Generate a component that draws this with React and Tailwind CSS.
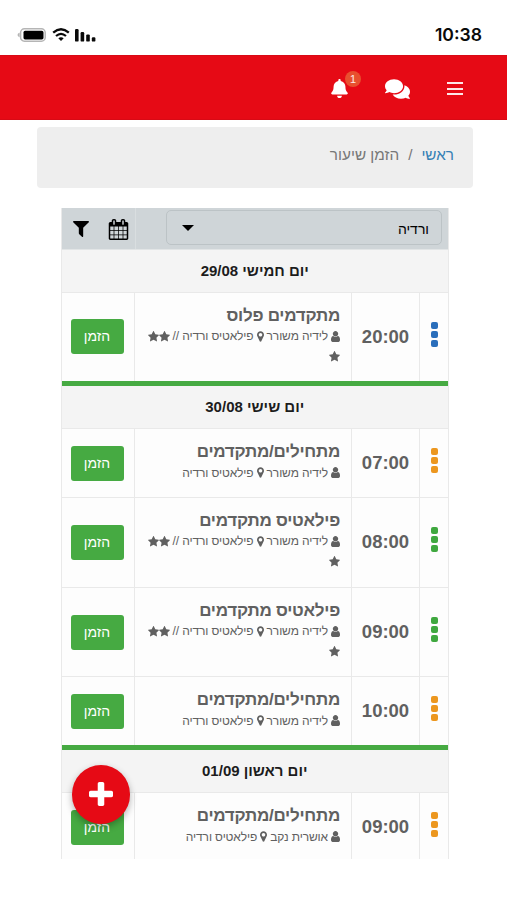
import React from 'react';
import { FaBell, FaComments } from 'react-icons/fa';

const PATHS = {
  star: 'M1728 647q0 22-26 48l-363 354 86 500q1 7 1 20 0 21-10.5 35.5t-30.5 14.5q-19 0-40-12l-449-236-449 236q-22 12-40 12-21 0-31.5-14.5t-10.5-35.5q0-6 2-20l86-500-364-354q-25-27-25-48 0-37 56-46l502-73 225-455q19-41 49-41t49 41l225 455 502 73q56 9 56 46z',
  marker: 'M1152 640q0-106-75-181t-181-75-181 75-75 181 75 181 181 75 181-75 75-181zm256 0q0 109-33 179l-364 774q-16 33-47.5 52t-67.5 19-67.5-19-46.5-52l-365-774q-33-70-33-179 0-212 150-362t362-150 362 150 150 362z',
  user: 'M1536 1399q0 109-62.5 187t-150.5 78h-854q-88 0-150.5-78t-62.5-187q0-85 8.5-160.5t31.5-152 58.5-131 94-89 134.5-34.5q131 128 313 128t313-128q76 0 134.5 34.5t94 89 58.5 131 31.5 152 8.5 160.5zm-256-887q0 159-112.5 271.5t-271.5 112.5-271.5-112.5-112.5-271.5 112.5-271.5 271.5-112.5 271.5 112.5 112.5 271.5z',
  calendar: 'M192 1664h288v-288h-288v288zm352 0h320v-288h-320v288zm-352-352h288v-320h-288v320zm352 0h320v-320h-320v320zm-352-384h288v-288h-288v288zm736 736h320v-288h-320v288zm-384-736h320v-288h-320v288zm768 736h288v-288h-288v288zm-384-352h320v-320h-320v320zm-352-864v-288q0-13-9.5-22.5t-22.5-9.5h-64q-13 0-22.5 9.5t-9.5 22.5v288q0 13 9.5 22.5t22.5 9.5h64q13 0 22.5-9.5t9.5-22.5zm736 864h288v-320h-288v320zm-384-384h320v-288h-320v288zm384 0h288v-288h-288v288zm32-480v-288q0-13-9.5-22.5t-22.5-9.5h-64q-13 0-22.5 9.5t-9.5 22.5v288q0 13 9.5 22.5t22.5 9.5h64q13 0 22.5-9.5t9.5-22.5zm384-64v1280q0 52-38 90t-90 38h-1408q-52 0-90-38t-38-90v-1280q0-52 38-90t90-38h128v-96q0-66 47-113t113-47h64q66 0 113 47t47 113v96h384v-96q0-66 47-113t113-47h64q66 0 113 47t47 113v96h128q52 0 90 38t38 90z',
  filter: 'M1595 295q17 41-14 70l-493 493v742q0 42-39 59-13 5-25 5-27 0-45-19l-256-256q-19-19-19-45v-486l-493-493q-31-29-14-70 17-39 59-39h1280q42 0 59 39z',
  plus: 'M1600 736v192q0 40-28 68t-68 28h-416v416q0 40-28 68t-68 28h-192q-40 0-68-28t-28-68v-416h-416q-40 0-68-28t-28-68v-192q0-40 28-68t68-28h416v-416q0-40 28-68t68-28h192q40 0 68 28t28 68v416h416q40 0 68 28t28 68z',
};

const Icon = ({ name, className, viewBox = '0 0 1792 1792' }) => (
  <svg viewBox={viewBox} className={className} fill="currentColor">
    <path d={PATHS[name]} />
  </svg>
);

const Star = () => <Icon name="star" viewBox="64 96 1664 1560" className="h-[11px] w-[11px]" />;

const days = [
  {
    title: 'יום חמישי 29/08',
    lessons: [
      { time: '20:00', name: 'מתקדמים פלוס', coach: 'לידיה משורר', stars: true, color: 'bg-[#2a6ebb]' },
    ],
  },
  {
    title: 'יום שישי 30/08',
    lessons: [
      { time: '07:00', name: 'מתחילים/מתקדמים', coach: 'לידיה משורר', color: 'bg-[#ec971f]' },
      { time: '08:00', name: 'פילאטיס מתקדמים', coach: 'לידיה משורר', stars: true, color: 'bg-[#3fa83f]' },
      { time: '09:00', name: 'פילאטיס מתקדמים', coach: 'לידיה משורר', stars: true, color: 'bg-[#3fa83f]' },
      { time: '10:00', name: 'מתחילים/מתקדמים', coach: 'לידיה משורר', color: 'bg-[#ec971f]' },
    ],
  },
  {
    title: 'יום ראשון 01/09',
    lessons: [
      { time: '09:00', name: 'מתחילים/מתקדמים', coach: 'אושרית נקב', color: 'bg-[#ec971f]' },
    ],
  },
];

const StatusBar = () => (
  <div className="flex h-[55px] items-center justify-between pl-[17px] pr-[25px] pt-[14px]">
    <div className="flex items-center">
      <svg width="29" height="14" viewBox="0 0 29 14">
        <path d="M2.6 4.8Q.5 5.4.5 7T2.6 9.2z" fill="#b5b5b5" />
        <rect x="3.6" y=".8" width="24.6" height="12.4" rx="3.8" fill="none" stroke="#b5b5b5" strokeWidth="1.5" />
        <rect x="6.5" y="2.8" width="20" height="8.6" rx="1.6" fill="#000" />
      </svg>
      <svg width="18" height="14" viewBox="0 0 18 14" className="ml-[6px]" fill="none" stroke="#0a0a0a">
        <path d="M1.2 4.6Q9-2.2 16.8 4.6" strokeWidth="2.3" />
        <path d="M4 8Q9 3.6 14 8" strokeWidth="2.2" />
        <path d="M9 13 6.3 10.2Q9 8.2 11.7 10.2z" fill="#0a0a0a" stroke="none" />
      </svg>
      <svg width="21" height="14" viewBox="0 0 21 14" className="ml-[5px]" fill="#0a0a0a">
        <rect x="0" y="1" width="3.6" height="12.6" rx="1.2" />
        <rect x="5.6" y="4" width="3.6" height="9.6" rx="1.2" />
        <rect x="11.2" y="6.4" width="3.6" height="7.2" rx="1.2" />
        <rect x="16.8" y="9.2" width="3.6" height="4.4" rx="1.2" />
      </svg>
    </div>
    <span className="pt-px font-['Inter',sans-serif] text-[17.6px] font-semibold leading-5 text-[#0a0a0a]">10:38</span>
  </div>
);

const NavBar = () => (
  <div className="flex h-[65px] items-center justify-end border-y border-[#d80a15] bg-[#e60a15] pr-[44px] pt-[2px] text-white">
    <div className="relative mr-[37px]">
      <FaBell className="h-[19px] w-[17px]" />
      <span className="absolute -top-[8px] left-[14px] flex h-4 w-4 items-center justify-center rounded-full bg-[#e8502f] text-[11px] leading-none text-white/90">1</span>
    </div>
    <FaComments className="mr-[37px] h-[24px] w-[25px]" />
    <div className="flex w-[16px] flex-col gap-[3.5px]">
      <span className="h-[2px] bg-white/90" />
      <span className="h-[2px] bg-white/90" />
      <span className="h-[2px] bg-white/90" />
    </div>
  </div>
);

const Toolbar = () => (
  <div className="flex h-[41.5px] border-b border-[#e2e5e6] bg-[#cfd5d8] text-black">
    <div className="flex flex-1 pr-[6px] pt-[2px]">
      <div className="flex h-[35px] w-[276px] items-center justify-between rounded-[5px] border border-[#bcc3c6] pl-[15px] pr-[12px] text-[14px]">
        <span className="pt-[3px]">ורדיה</span>
        <span className="border-x-[6px] border-t-[6px] border-x-transparent border-t-black" />
      </div>
    </div>
    <div className="flex w-[74px] items-center justify-between border-r border-[#d9dee0] pl-[11px] pr-[6px] pt-[2px]">
      <Icon name="calendar" className="h-[21px] w-[21px]" />
      <Icon name="filter" viewBox="192 256 1408 1408" className="h-[16px] w-[16px]" />
    </div>
  </div>
);

const Lesson = ({ time, name, coach, stars, color }) => (
  <div className={`grid grid-cols-[28px_69px_216px_75px] border-t border-[#e9e9e9] bg-[#fdfdfd] text-[#606060] ${stars ? 'h-[89.7px]' : 'h-[68.8px]'}`}>
    <div className="flex flex-col items-center justify-center gap-[2px] pb-[5px]">
      <span className={`h-[7px] w-[7px] rounded-[2px] ${color}`} />
      <span className={`h-[7px] w-[7px] rounded-[2px] ${color}`} />
      <span className={`h-[7px] w-[7px] rounded-[2px] ${color}`} />
    </div>
    <div className="flex items-center justify-center border-x border-[#e9e9e9] text-[18.5px] font-bold">{time}</div>
    <div className="whitespace-nowrap pr-[11px] pt-[13px]">
      <div className="text-[17px] font-bold leading-[20px] tracking-[-0.26px]">{name}</div>
      <div className="flex h-[21px] items-center text-[12px] tracking-[-0.12px]">
        <Icon name="user" viewBox="256 128 1280 1536" className="h-[11px] w-[9px]" />
        <span className="mr-[3px]">{coach}</span>
        <Icon name="marker" viewBox="384 128 1024 1536" className="mx-[3px] h-[11px] w-[7px]" />
        <span>פילאטיס ורדיה{stars && ' //'}</span>
        {stars && (
          <span className="mr-[3px] flex">
            <Star />
            <Star />
          </span>
        )}
      </div>
      {stars && (
        <div className="mt-[4px]">
          <Star />
        </div>
      )}
    </div>
    <div className="flex items-center justify-center border-r border-[#e9e9e9]">
      <button className="h-[35px] w-[53px] rounded-[3px] bg-[#46aa42] text-[14px] text-white">הזמן</button>
    </div>
  </div>
);

export default function App() {
  return (
    <div className="relative h-[900px] w-[507px] overflow-hidden bg-white font-['Liberation_Sans',Arial,sans-serif]">
      <StatusBar />
      <NavBar />

      {/* Breadcrumb */}
      <div dir="rtl" className="mt-[7px] mr-[34px] ml-[37px] flex h-[61px] items-start gap-[9px] rounded-[4px] bg-[#eeeeee] pr-[19px] pt-[18px] text-[15.3px] leading-[20px] text-[#777]">
        <span className="text-[#3580b5]">ראשי</span>
        <span>/</span>
        <span>הזמן שיעור</span>
      </div>

      {/* Schedule */}
      <div dir="rtl" className="mt-[20px] ml-[60.5px] h-[651px] w-[388.5px] overflow-hidden border-x border-[#e9e9e9]">
        <Toolbar />
        {days.map((day, i) => (
          <div key={day.title} className={i > 0 ? 'border-t-[5px] border-[#46aa42]' : ''}>
            <div className="flex h-[42px] items-center justify-center bg-[#f4f4f4] pt-px text-[15px] font-bold text-[#1c1c1c]">{day.title}</div>
            {day.lessons.map((lesson) => (
              <Lesson key={lesson.time} {...lesson} />
            ))}
          </div>
        ))}
      </div>

      {/* Floating add button */}
      <button className="absolute top-[765px] left-[72px] flex h-[59px] w-[58px] items-center justify-center rounded-full bg-[#e60a15] text-white shadow-[0_3px_7px_rgba(0,0,0,0.3)]">
        <Icon name="plus" viewBox="192 128 1408 1408" className="mb-[2px] h-[24px] w-[24px]" />
      </button>
    </div>
  );
}
